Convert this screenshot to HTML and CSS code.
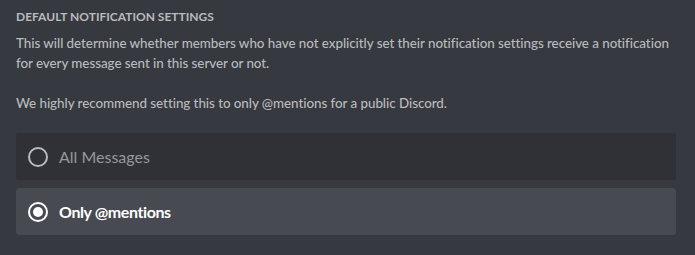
FILE: index.html
```html
<!DOCTYPE html>
<html>
<head>
<meta charset="utf-8">
<link rel="stylesheet" href="styles.css">
</head>
<body>
<div class="section">
  <h5 class="title">Default Notification Settings</h5>
  <div class="desc">
    <p>This will determine whether members who have not explicitly set their notification settings receive a notification for every message sent in this server or not.</p>
    <p>We highly recommend setting this to only @mentions for a public Discord.</p>
  </div>
  <div class="options">
    <div class="option">
      <span class="radio"></span>
      <span class="label">All Messages</span>
    </div>
    <div class="option selected">
      <span class="radio"><span class="dot"></span></span>
      <span class="label">Only @mentions</span>
    </div>
  </div>
</div>
</body>
</html>
```

FILE: styles.css
```css
html, body {
  margin: 0;
  padding: 0;
  background: #36393f;
  height: 100%;
}
body {
  font-family: Lato, "Open Sans", sans-serif;
  overflow: hidden;
}
.section {
  padding: 9px 19px 0 16px;
}
.title {
  margin: 0;
  font-size: 12px;
  line-height: 16px;
  font-weight: 700;
  text-transform: uppercase;
  color: #b9bbbe;
  letter-spacing: 0;
}
.desc {
  margin-top: 8px;
  margin-right: -6px;
  color: #b9bbbe;
  font-size: 13.4px;
  letter-spacing: -0.05px;
  line-height: 20px;
  font-weight: 500;
}
.desc p {
  margin: 0 0 20px 0;
}
.options {
  display: flex;
  flex-direction: column;
  gap: 8px;
  margin-top: 0;
}
.option {
  display: flex;
  align-items: center;
  height: 47px;
  padding: 0 12px;
  border-radius: 3px;
  background: #2f3136;
  color: #96989d;
  font-size: 16px;
}
.option.selected {
  background: #474a51;
  color: #ffffff;
  font-weight: 700;
  letter-spacing: -0.4px;
}
.radio {
  box-sizing: border-box;
  width: 20px;
  height: 20px;
  border: 2px solid #b9bbbe;
  border-radius: 50%;
  display: flex;
  align-items: center;
  justify-content: center;
  margin-right: 11px;
  flex: none;
}
.selected .radio {
  border-color: #ffffff;
}
.dot {
  width: 10px;
  height: 10px;
  border-radius: 50%;
  background: #ffffff;
}
```
